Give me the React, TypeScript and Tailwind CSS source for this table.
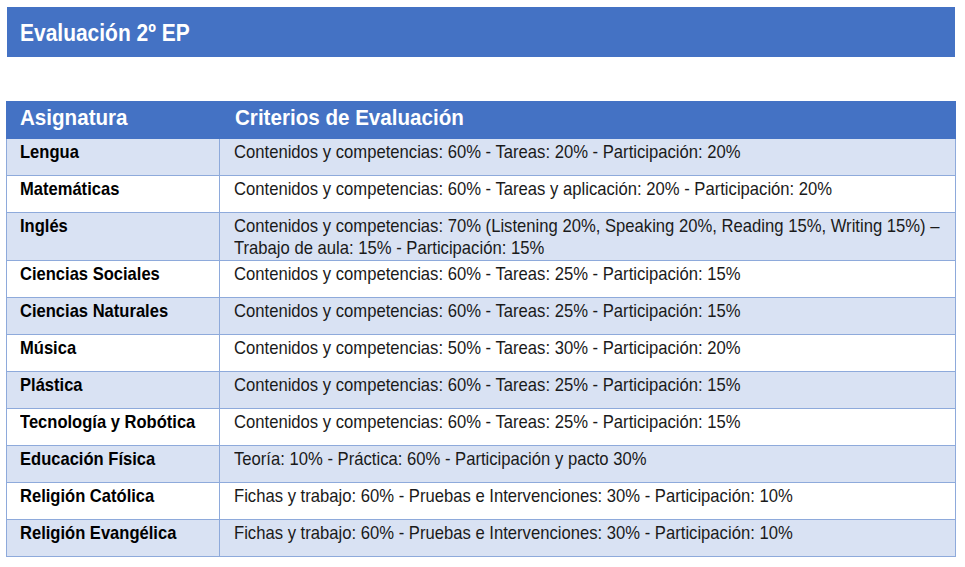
import React from "react";

const rows: { name: string; lines: string[] }[] = [
  { name: "Lengua", lines: ["Contenidos y competencias: 60% - Tareas: 20% - Participación: 20%"] },
  { name: "Matemáticas", lines: ["Contenidos y competencias: 60% - Tareas y aplicación: 20% - Participación: 20%"] },
  {
    name: "Inglés",
    lines: [
      "Contenidos y competencias: 70% (Listening 20%, Speaking 20%, Reading 15%, Writing 15%) –",
      "Trabajo de aula: 15% - Participación: 15%",
    ],
  },
  { name: "Ciencias Sociales", lines: ["Contenidos y competencias: 60% - Tareas: 25% - Participación: 15%"] },
  { name: "Ciencias Naturales", lines: ["Contenidos y competencias: 60% - Tareas: 25% - Participación: 15%"] },
  { name: "Música", lines: ["Contenidos y competencias: 50% - Tareas: 30% - Participación: 20%"] },
  { name: "Plástica", lines: ["Contenidos y competencias: 60% - Tareas: 25% - Participación: 15%"] },
  { name: "Tecnología y Robótica", lines: ["Contenidos y competencias: 60% - Tareas: 25% - Participación: 15%"] },
  { name: "Educación Física", lines: ["Teoría: 10% - Práctica: 60% - Participación y pacto 30%"] },
  { name: "Religión Católica", lines: ["Fichas y trabajo: 60% - Pruebas e Intervenciones: 30% - Participación: 10%"] },
  { name: "Religión Evangélica", lines: ["Fichas y trabajo: 60% - Pruebas e Intervenciones: 30% - Participación: 10%"] },
];

export default function App() {
  return (
    <div
      className="w-[965px] h-[567px] bg-white overflow-hidden flex flex-col"
      style={{ fontFamily: '"Liberation Sans", Arial, sans-serif' }}
    >
      <div className="mt-[7px] ml-[7px] w-[948px] h-[50px] bg-[#4472C4] flex items-center pl-[13px] pt-[2px]">
        <span className="inline-block origin-left scale-x-[0.9] whitespace-nowrap text-white font-bold text-[23.3px] leading-[26px]">
          Evaluación 2º EP
        </span>
      </div>
      <div className="mt-[44px] ml-[6px] w-[950px] flex flex-col">
        <div className="h-[38px] bg-[#4472C4] flex text-white font-bold text-[22.5px] leading-[26px] pt-[4px]">
          <div className="w-[214px] pl-[14px]">
            <span className="inline-block origin-left scale-x-[0.915] whitespace-nowrap">Asignatura</span>
          </div>
          <div className="flex-1 pl-[15px]">
            <span className="inline-block origin-left scale-x-[0.915] whitespace-nowrap">Criterios de Evaluación</span>
          </div>
        </div>
        {rows.map((r, i) => (
          <div
            key={r.name}
            className={`flex border-x border-b border-[#8EAADB] ${r.lines.length > 1 ? "h-[48px]" : "h-[37px]"} ${
              i % 2 === 0 ? "bg-[#D9E2F3]" : "bg-white"
            }`}
          >
            <div className="w-[213px] shrink-0 border-r border-[#8EAADB] pl-[13px] pt-[2px] font-bold text-black text-[18.6px] leading-[21.7px]">
              <span className="inline-block origin-left scale-x-[0.89] whitespace-nowrap">{r.name}</span>
            </div>
            <div className="flex-1 flex flex-col items-start pl-[14px] pt-[2px] text-[#1a1a1a] text-[18.6px] leading-[21.7px]">
              {r.lines.map((l) => (
                <span key={l} className="inline-block origin-left scale-x-[0.895] whitespace-nowrap">
                  {l}
                </span>
              ))}
            </div>
          </div>
        ))}
      </div>
    </div>
  );
}
